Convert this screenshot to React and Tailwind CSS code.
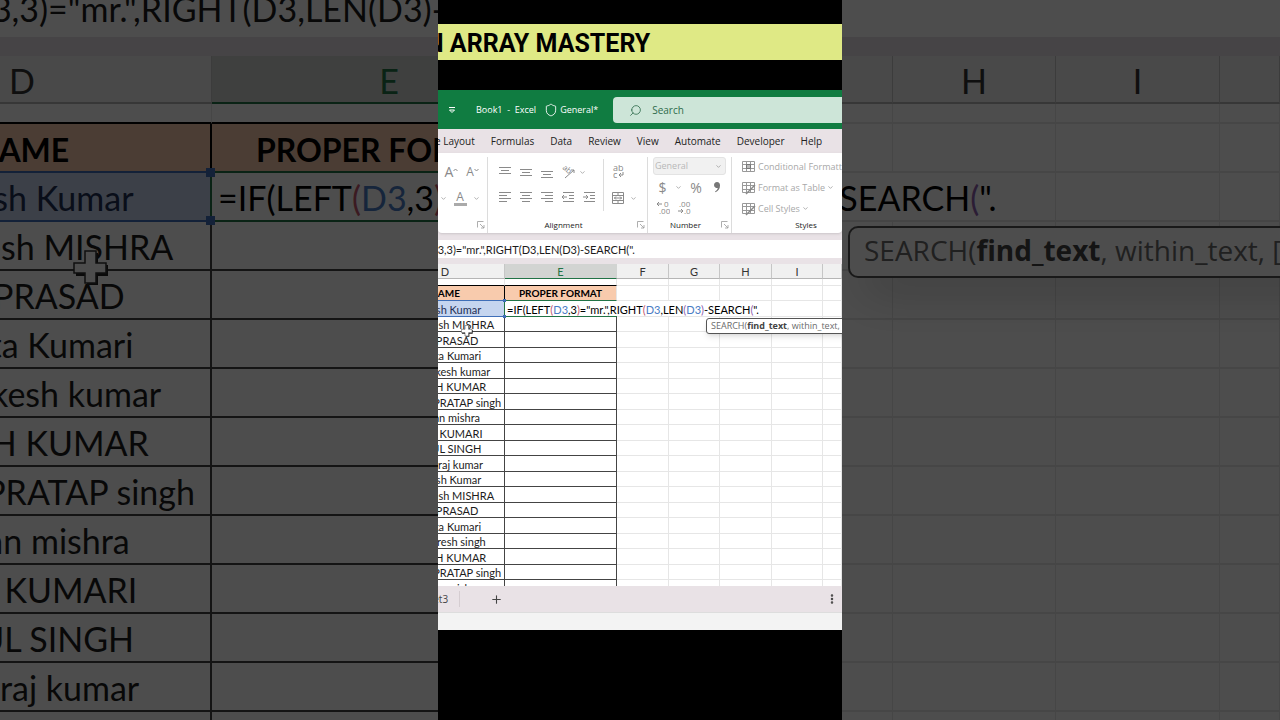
import { ChevronDown, EllipsisVertical, Plus, Search, Shield } from "lucide-react";
import clsx from "clsx";

const FORMULA = '=IF(LEFT(D3,3)="mr.",RIGHT(D3,LEN(D3)-SEARCH(".';

const names = [
  "Ramesh Kumar",
  "Mr. Rakesh MISHRA",
  "AJIT PRASAD",
  "Sangita Kumari",
  "Mr. Mukesh kumar",
  "RAJESH KUMAR",
  "MR. OM PRATAP singh",
  "Roshan mishra",
  "MANI KUMARI",
  "RAHUL SINGH",
  "Mr. Suraj kumar",
  "Ramesh Kumar",
  "Mr. Rakesh MISHRA",
  "AJIT PRASAD",
  "Sangita Kumari",
  "Mr. Naresh singh",
  "RAJESH KUMAR",
  "MR. OM PRATAP singh",
  "Roshan mishra",
];

const tabs = ["Page Layout", "Formulas", "Data", "Review", "View", "Automate", "Developer", "Help"];

// the same sheet is shown at two zoom levels
const sizes = {
  small: {
    pan: "-ml-[52px]",
    bar: "h-[18px] -ml-[3px] text-[11px]",
    gap: "h-[6px]",
    cols: ["w-[119px]", "w-[112px]", "w-[52px]", "w-[51px]", "w-[52px]", "w-[51px]", ""],
    letters: "h-[15px] pt-px text-[11px] leading-[13px]",
    spacer: "h-[7px]",
    head: "h-[15px] pt-px text-[10px] leading-[13px]",
    cell: "text-[11px] leading-[13px]",
    pad: "pt-px",
    rows: ["h-[16px]", "h-[15px]"],
    right: "border-r",
    bottom: "border-b",
    inset: "pl-[2px]",
    handleTop: "size-[3px] -right-[2px] -top-[2px]",
    handleBottom: "size-[3px] -right-[2px] -bottom-[2px]",
    tip: "left-[201px] top-[17px] h-[16px] rounded-[3px] border px-1 text-[9px] leading-[14px] shadow-md",
    cursor: "size-[12px] left-[75px] top-[8px]",
  },
  large: {
    pan: "-ml-[167px] -mt-[20px]",
    bar: "h-[57px] -ml-[10px] text-[34px]",
    gap: "h-[19px]",
    cols: ["w-[379px]", "w-[355px]", "w-[163px]", "w-[163px]", "w-[163px]", "w-[164px]", ""],
    letters: "h-[48px] pt-1 text-[34px] leading-[42px]",
    spacer: "h-[20px]",
    head: "h-[49px] pt-1 text-[32px] leading-[43px]",
    cell: "text-[34px] leading-[44px]",
    pad: "pt-[3px]",
    rows: ["h-[49px]", "h-[49px]"],
    right: "border-r-2",
    bottom: "border-b-2",
    inset: "pl-[6px]",
    handleTop: "size-[9px] -right-[5px] -top-[5px]",
    handleBottom: "size-[9px] -right-[5px] -bottom-[5px]",
    tip: "left-[636px] top-[53px] h-[52px] rounded-[10px] border-2 px-[14px] text-[28px] leading-[44px] shadow-2xl",
    cursor: "size-[36px] left-[240px] top-[28px]",
  },
};

function FormulaText() {
  return (
    <span className="text-black">
      =IF(LEFT<span className="text-[#c4566e]">(</span>
      <span className="text-[#4a7cc4]">D3</span>,3<span className="text-[#c4566e]">)</span>
      ="mr.",RIGHT<span className="text-[#c4566e]">(</span>
      <span className="text-[#4a7cc4]">D3</span>,LEN<span className="text-[#8f62b0]">(</span>
      <span className="text-[#4a7cc4]">D3</span>
      <span className="text-[#8f62b0]">)</span>-SEARCH<span className="text-[#8f62b0]">(</span>".
    </span>
  );
}

function CrossCursor({ className }) {
  return (
    <svg viewBox="0 0 36 36" className={clsx("absolute z-10", className)}>
      <path d="M14 3h11v12h10v11h-10v9H14v-9H3V15h11z" fill="#222" />
      <path d="M12 1h11v12h10v10H23v10H12V23H1V13h11z" fill="#fff" stroke="#333" strokeWidth="1.5" />
    </svg>
  );
}

function Sheet({ size, label }) {
  const s = sizes[size];
  const grid = clsx(s.bottom, "border-r border-b-[#e6e6e6] border-r-[#e6e6e6]");
  const rest = [0, 1, 2, 3, 4];

  return (
    <div className={clsx("bg-white font-['Lato','Liberation_Sans',sans-serif] text-[#1c1c1c]", s.pan)}>
      <input
        aria-label={label}
        readOnly
        value={FORMULA}
        className={clsx("block w-full bg-white p-0 outline-none", s.bar)}
      />
      <div className={clsx("bg-[#e9e2e6]", s.gap)} />
      <table className="w-full table-fixed border-separate border-spacing-0">
        <colgroup>
          {s.cols.map((w, i) => (
            <col key={i} className={w} />
          ))}
        </colgroup>
        <thead>
          <tr>
            {["D", "E", "F", "G", "H", "I", ""].map((c) => (
              <th
                key={c}
                className={clsx(
                  "p-0 font-normal border-r",
                  s.letters,
                  s.bottom,
                  c === "E"
                    ? "bg-[#d2d4d2] text-[#217346] border-b-[#217346] border-r-[#d2d4d2]"
                    : "bg-[#f0f0f0] text-[#333] border-b-[#b5b5b5] border-r-[#c6c6c6]"
                )}
              >
                {c}
              </th>
            ))}
          </tr>
        </thead>
        <tbody>
          <tr>
            <td className={clsx("p-0 border-r border-r-[#e6e6e6] border-b-black", s.spacer, s.bottom)} />
            <td className={clsx("p-0 border-r border-r-[#e6e6e6] border-b-black", s.spacer, s.bottom)} />
            {rest.map((c) => (
              <td key={c} className={clsx("p-0", grid)} />
            ))}
          </tr>
          <tr className="font-bold text-black">
            <td className={clsx("p-0 text-center bg-[#f8cbad] border-r-black border-b-[#3f6fb8]", s.head, s.right, s.bottom)}>
              NAME
            </td>
            <td className={clsx("p-0 text-center bg-[#f8cbad] border-r border-r-[#e6e6e6] border-b-[#217346]", s.head, s.bottom)}>
              PROPER FORMAT
            </td>
            {rest.map((c) => (
              <td key={c} className={clsx("p-0", grid)} />
            ))}
          </tr>
          {names.map((name, i) => {
            const active = i === 0;
            return (
              <tr key={i} className={clsx(s.cell, s.rows[i % 2])}>
                <td
                  className={clsx(
                    "relative p-0 text-center whitespace-nowrap",
                    s.pad,
                    s.right,
                    s.bottom,
                    active
                      ? "bg-[#c5d5ef] text-[#1f2f55] border-r-[#217346] border-b-[#3f6fb8]"
                      : "border-r-[#444] border-b-[#444]"
                  )}
                >
                  {name}
                  {active && <span className={clsx("absolute z-10 bg-[#3f6fb8]", s.handleTop)} />}
                  {active && <span className={clsx("absolute z-10 bg-[#3f6fb8]", s.handleBottom)} />}
                  {i === 1 && <CrossCursor className={s.cursor} />}
                </td>
                <td
                  className={clsx(
                    "p-0 whitespace-nowrap",
                    s.pad,
                    s.bottom,
                    active ? "relative border-b-[#217346]" : clsx("border-r-[#444] border-b-[#444]", s.right),
                    s.inset
                  )}
                >
                  {active && <FormulaText />}
                  {active && (
                    <div
                      className={clsx(
                        "absolute z-20 border-[#555] bg-white font-['Open_Sans','Noto_Sans',sans-serif] text-[#6b6b6b]",
                        s.tip
                      )}
                    >
                      SEARCH(<b className="text-[#444]">find_text</b>, within_text, [start_num])
                    </div>
                  )}
                </td>
                {rest.map((c) => (
                  <td
                    key={c}
                    className={clsx("p-0", active && c < 2 ? clsx(s.bottom, "border-b-[#e6e6e6]") : grid)}
                  />
                ))}
              </tr>
            );
          })}
        </tbody>
      </table>
    </div>
  );
}

// horizontal strokes used by the paragraph icons
function Lines({ rows, children }) {
  return (
    <svg viewBox="0 0 14 14" className="size-[14px]" fill="none" stroke="#8a8a8a">
      {rows.map(([x1, x2, y]) => (
        <path key={y} d={`M${x1} ${y}.5H${x2}`} />
      ))}
      {children}
    </svg>
  );
}

function IconButton({ label, children, className = "w-[21px]" }) {
  return (
    <button aria-label={label} className={clsx("flex h-5 shrink-0 items-center justify-center", className)}>
      {children}
    </button>
  );
}

function Caret() {
  return <ChevronDown size={7} strokeWidth={3} className="shrink-0 text-[#a8a8a8]" />;
}

function Launcher() {
  return (
    <svg viewBox="0 0 8 8" className="size-[8px]" fill="none" stroke="#999" strokeWidth="0.8">
      <path d="M.5 6.500V.5H6.500M3 3l4 4M7 4v3H4" />
    </svg>
  );
}

function GroupLabel({ children }) {
  return (
    <div className="mt-auto flex h-4 items-center px-[2px]">
      <span className="flex-1 text-center text-[8px] text-[#222]">{children}</span>
      <Launcher />
    </div>
  );
}

function TableIcon({ brush }) {
  return (
    <svg viewBox="0 0 14 14" className="size-[14px] shrink-0" fill="none" stroke="#999">
      <path d="M.5 1.500h12v10H.5zM.5 4.500h12M.5 8.500h12M4.500 1.500v10M8.500 1.500v10" />
      {brush ? (
        <path d="M13 4L6 11l-2 2" stroke="#888" strokeWidth="1.5" />
      ) : (
        <path d="M4.500 4.500h4v4h-4z" fill="#bbb" stroke="#777" />
      )}
    </svg>
  );
}

function Ribbon() {
  return (
    <div className="flex h-[80px] overflow-hidden rounded-b bg-white pt-1 text-[#8a8a8a] shadow-sm">
      {/* Font */}
      <div className="flex w-[50px] shrink-0 flex-col border-r border-[#dcdcdc] pt-[2px]">
        <div className="flex h-[26px] items-center pl-[3px]">
          <IconButton label="Increase font size">
            <span className="text-[14px] leading-4">A</span>
            <svg viewBox="0 0 5 8" className="h-2 w-[5px]" fill="none" stroke="#8a8a8a">
              <path d="M.5 3l2-2 2 2" />
            </svg>
          </IconButton>
          <IconButton label="Decrease font size">
            <span className="text-[12px] leading-4">A</span>
            <svg viewBox="0 0 5 8" className="h-2 w-[5px]" fill="none" stroke="#8a8a8a">
              <path d="M.5 1l2 2 2-2" />
            </svg>
          </IconButton>
        </div>
        <div className="flex h-[26px] items-center">
          <IconButton label="Fill options" className="w-[10px]">
            <Caret />
          </IconButton>
          <IconButton label="Font color" className="w-[24px]">
            <span className="w-[13px] border-b-[3px] border-[#aaa] text-center text-[12px] leading-[12px]">A</span>
          </IconButton>
          <IconButton label="Font color options" className="w-[8px]">
            <Caret />
          </IconButton>
        </div>
        <div className="mt-auto flex h-4 items-center justify-end px-[2px]">
          <Launcher />
        </div>
      </div>

      {/* Alignment */}
      <div className="flex w-[160px] shrink-0 flex-col border-r border-[#dcdcdc] pt-[2px]">
        <div className="flex">
          <div className="w-[116px] border-r border-[#dcdcdc] pl-[6px]">
            <div className="flex h-[26px] items-center">
              <IconButton label="Top align"><Lines rows={[[1, 13, 2], [3, 11, 5], [1, 13, 8]]} /></IconButton>
              <IconButton label="Middle align"><Lines rows={[[1, 13, 4], [3, 11, 7], [1, 13, 10]]} /></IconButton>
              <IconButton label="Bottom align"><Lines rows={[[1, 13, 6], [3, 11, 9], [1, 13, 12]]} /></IconButton>
              <IconButton label="Orientation">
                <svg viewBox="0 0 14 14" className="size-[14px]" fill="none" stroke="#8a8a8a">
                  <text x="0" y="6" fontSize="8" fill="#8a8a8a" stroke="none" transform="rotate(40 4 6)">ab</text>
                  <path d="M4 13l9-8M10 5h3v3" />
                </svg>
              </IconButton>
              <IconButton label="Orientation options" className="w-[8px]"><Caret /></IconButton>
            </div>
            <div className="flex h-[26px] items-center">
              <IconButton label="Align left"><Lines rows={[[1, 13, 1], [1, 9, 4], [1, 13, 7], [1, 9, 10]]} /></IconButton>
              <IconButton label="Center"><Lines rows={[[1, 13, 1], [3, 11, 4], [1, 13, 7], [3, 11, 10]]} /></IconButton>
              <IconButton label="Align right"><Lines rows={[[1, 13, 1], [5, 13, 4], [1, 13, 7], [5, 13, 10]]} /></IconButton>
              <IconButton label="Decrease indent">
                <Lines rows={[[2, 13, 1], [8, 13, 4], [8, 13, 7], [2, 13, 10]]}><path d="M6 6H1M3 4L1 6l2 2" /></Lines>
              </IconButton>
              <IconButton label="Increase indent">
                <Lines rows={[[2, 13, 1], [8, 13, 4], [8, 13, 7], [2, 13, 10]]}><path d="M1 6h5M4 4l2 2-2 2" /></Lines>
              </IconButton>
            </div>
          </div>
          <div className="pl-[3px]">
            <div className="flex h-[26px] items-center">
              <IconButton label="Wrap text">
                <svg viewBox="0 0 14 14" className="size-[14px]" fill="none" stroke="#8a8a8a">
                  <text x="2" y="6" fontSize="9" fill="#8a8a8a" stroke="none">ab</text>
                  <text x="2" y="13" fontSize="9" fill="#8a8a8a" stroke="none">c</text>
                  <path d="M12 7v3H8M10 8l-2 2 2 2" />
                </svg>
              </IconButton>
            </div>
            <div className="flex h-[26px] items-center">
              <IconButton label="Merge and center">
                <svg viewBox="0 0 14 14" className="size-[14px]" fill="none" stroke="#8a8a8a">
                  <path d="M1.500 1.500h11v11h-11zM1 4.500h12M1 9.500h12M7 1v3M7 10v3M3 7h8M5 5.500L3.500 7 5 8.500M9 5.500L10.500 7 9 8.500" />
                </svg>
              </IconButton>
              <IconButton label="Merge options" className="w-[10px]"><Caret /></IconButton>
            </div>
          </div>
        </div>
        <GroupLabel>Alignment</GroupLabel>
      </div>

      {/* Number */}
      <div className="flex w-[84px] shrink-0 flex-col border-r border-[#dcdcdc]">
        <div className="relative mx-[5px] flex items-center">
          <select
            aria-label="Number format"
            className="h-[18px] w-full appearance-none rounded-[3px] border border-[#e3e3e3] bg-[#f1f1f1] px-px text-[9px] leading-4 text-[#b8b8b8]"
          >
            <option>General</option>
          </select>
          <ChevronDown size={7} strokeWidth={3} className="absolute right-1 text-[#a8a8a8]" />
        </div>
        <div className="flex h-[24px] items-center pl-1">
          <IconButton label="Accounting format"><span className="text-[14px]">$</span></IconButton>
          <IconButton label="Accounting options" className="w-[10px]"><Caret /></IconButton>
          <IconButton label="Percent style" className="w-[26px]"><span className="text-[14px]">%</span></IconButton>
          <IconButton label="Comma style" className="w-[16px]">
            <svg viewBox="0 0 8 12" className="h-3 w-2" fill="#777">
              <path d="M4 1a3 3 0 1 0 .8 5.900C4.500 8.500 3.500 9.500 2 10.500l.6.8C5.500 10 7 7.500 7 4.500 7 2.500 6 1 4 1z" />
            </svg>
          </IconButton>
        </div>
        <div className="flex h-[16px] items-center pl-1">
          <IconButton label="Increase decimal">
            <svg viewBox="0 0 14 14" className="size-[14px]" fill="none" stroke="#8a8a8a">
              <path d="M6 4H1M3 2L1 4l2 2" />
              <text x="8" y="7" fontSize="8" fill="#8a8a8a" stroke="none">0</text>
              <text x="3" y="14" fontSize="8" fill="#8a8a8a" stroke="none">.00</text>
            </svg>
          </IconButton>
          <IconButton label="Decrease decimal">
            <svg viewBox="0 0 14 14" className="size-[14px]" fill="none" stroke="#8a8a8a">
              <path d="M1 11h5M4 9l2 2-2 2" />
              <text x="2" y="7" fontSize="8" fill="#8a8a8a" stroke="none">.00</text>
              <text x="7" y="14" fontSize="8" fill="#8a8a8a" stroke="none">.0</text>
            </svg>
          </IconButton>
        </div>
        <GroupLabel>Number</GroupLabel>
      </div>

      {/* Styles */}
      <div className="flex w-[138px] shrink-0 flex-col pl-[10px] text-[9px] text-[#a8a8a8]">
        <button className="flex h-[21px] shrink-0 items-center gap-[2px] whitespace-nowrap pb-[2px]">
          <TableIcon />
          Conditional Formatting
        </button>
        <button className="flex h-[21px] shrink-0 items-center gap-[2px] whitespace-nowrap pb-[2px]">
          <TableIcon brush />
          Format as Table
          <Caret />
        </button>
        <button className="flex h-[21px] shrink-0 items-center gap-[2px] whitespace-nowrap pb-[2px]">
          <TableIcon brush />
          Cell Styles
          <Caret />
        </button>
        <div className="flex h-[10px] items-center justify-center text-[8px] text-[#222]">Styles</div>
      </div>
    </div>
  );
}

function TitleBar() {
  return (
    <header className="flex h-[39px] items-center bg-[#107c41] pl-[10px] pt-px text-[9px] text-white">
      <svg viewBox="0 0 8 8" className="size-[8px]" fill="none" stroke="#fff">
        <path d="M1 1.500h6M1.500 4h5L4 6.500z" />
      </svg>
      <span className="ml-5 whitespace-pre">Book1  -  Excel</span>
      <Shield size={14} strokeWidth={1.5} className="ml-2 mr-[2px]" />
      <span>General*</span>
      <label className="ml-[15px] flex h-[26px] flex-1 items-center gap-[10px] rounded-l bg-[#cde5d8] pl-4 text-[10px] text-[#2f6b4c]">
        <Search size={13} strokeWidth={1.5} className="shrink-0 -scale-x-100" />
        <input type="text" placeholder="Search" className="w-full bg-transparent outline-none placeholder:text-[#2f6b4c]" />
      </label>
    </header>
  );
}

export default function App() {
  return (
    <main className="grid h-screen grid-cols-1 grid-rows-1 overflow-hidden bg-black">
      {/* enlarged backdrop */}
      <div className="col-start-1 row-start-1 overflow-hidden opacity-30">
        <Sheet size="large" label="Formula bar, enlarged" />
      </div>

      {/* video frame */}
      <div className="z-10 col-start-1 row-start-1 flex w-[404px] flex-col justify-self-center overflow-hidden bg-black font-['Open_Sans','Noto_Sans',sans-serif]">
        <h1 className="mt-6 h-9 shrink-0 overflow-hidden whitespace-nowrap bg-[#dfe985] font-['Roboto',sans-serif] text-[25px] font-bold leading-[39px] text-black">
          <span className="-ml-3">N ARRAY MASTERY</span>
        </h1>
        <div className="mt-[30px] bg-[#e9e2e6]">
          <TitleBar />
          <nav className="flex h-6 items-center gap-4 pt-px text-[10px] text-[#222]">
            {tabs.map((tab, i) => (
              <button key={tab} className={clsx("shrink-0", i === 0 && "-ml-[20px]")}>
                {tab}
              </button>
            ))}
          </nav>
          <Ribbon />
          <div className="mt-[7px] h-[346px] overflow-hidden">
            <Sheet size="small" label="Formula bar" />
          </div>
          <footer>
            <div className="flex h-[26px] items-center text-[10px] text-[#444]">
              <button className="-ml-[22px] h-4 border-r border-[#d5cdd1] pr-[11px]">Sheet3</button>
              <button aria-label="New sheet" className="ml-[30px]">
                <Plus size={13} strokeWidth={2} />
              </button>
              <button aria-label="Sheet options" className="ml-auto mr-1">
                <EllipsisVertical size={12} strokeWidth={3} />
              </button>
            </div>
            <div className="h-[18px] border-t border-[#ddd] bg-[#f3f3f3]" />
          </footer>
        </div>
      </div>
    </main>
  );
}
